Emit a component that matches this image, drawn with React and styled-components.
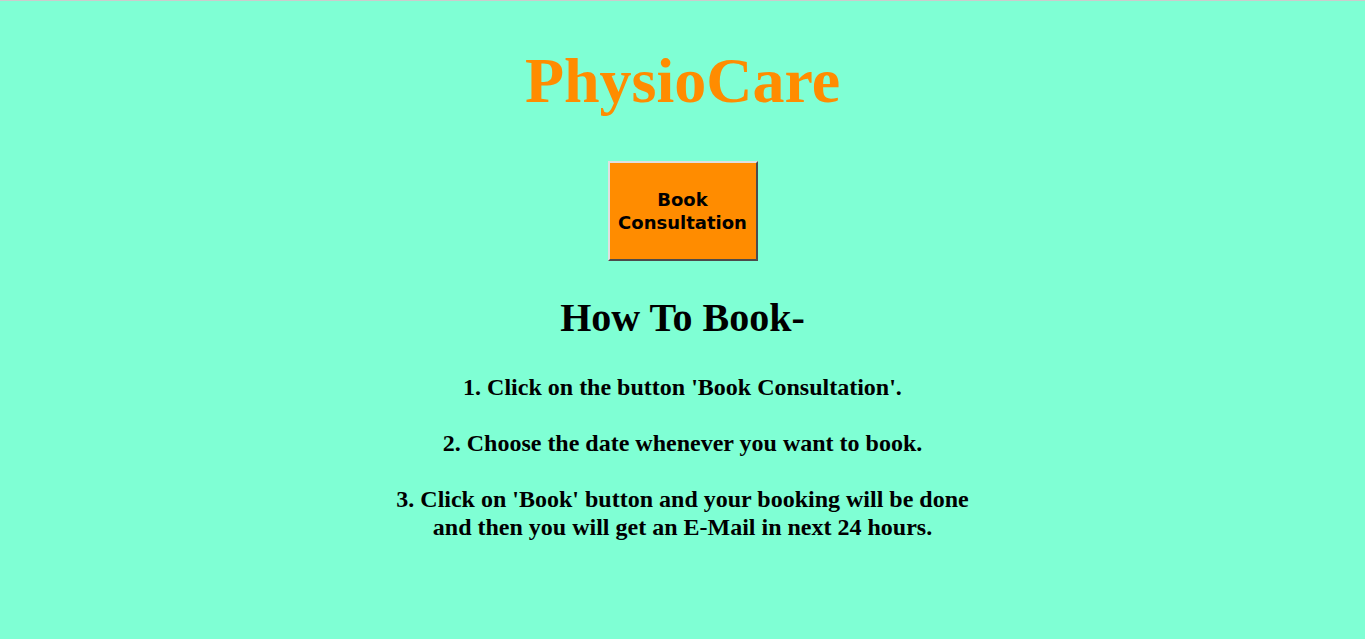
import React from 'react'
import styled, { createGlobalStyle } from 'styled-components'

const GlobalStyle = createGlobalStyle`
  html, body {
    margin: 0;
    padding: 0;
    background: #7fffd4;
  }
  body {
    border-top: 1px solid #cccccc;
    font-family: "Liberation Serif", "Times New Roman", serif;
  }
`;

const Page = styled.div`
  min-height: 638px;
  display: flex;
  flex-direction: column;
  align-items: center;
  text-align: center;
`;

const Title = styled.h1`
  margin: 40px 0 0;
  font-size: 64px;
  line-height: 80px;
  font-weight: bold;
  color: #ff8c00;
`;

const BookButton = styled.button`
  margin-top: 40px;
  width: 150px;
  height: 100px;
  background: #ff8c00;
  border: 2px outset #e0e0e0;
  border-right-color: #a0a0a0;
  border-bottom-color: #a0a0a0;
  font-family: "DejaVu Sans", Verdana, sans-serif;
  font-weight: bold;
  font-size: 18px;
  line-height: 23px;
  color: #000;
  cursor: pointer;
`;

const Heading = styled.h2`
  margin: 32px 0 0;
  font-size: 40px;
  line-height: 50px;
  font-weight: bold;
`;

const Steps = styled.p`
  margin: 30px 0 0;
  font-size: 24px;
  line-height: 28px;
  font-weight: bold;
`;

export default function App() {
  return (
    <>
      <GlobalStyle />
      <Page>
        <Title>PhysioCare</Title>
        <BookButton>Book<br />Consultation</BookButton>
        <Heading>How To Book-</Heading>
        <Steps>
          1. Click on the button 'Book Consultation'.<br /><br />
          2. Choose the date whenever you want to book.<br /><br />
          3. Click on 'Book' button and your booking will be done<br />
          and then you will get an E-Mail in next 24 hours.
        </Steps>
      </Page>
    </>
  )
}
